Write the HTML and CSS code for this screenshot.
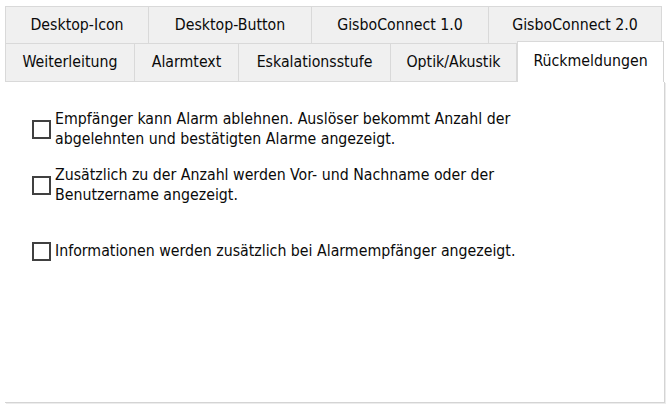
FILE: index.html
```html
<!DOCTYPE html>
<html lang="de">
<head>
<meta charset="utf-8">
<link rel="stylesheet" href="styles.css">
</head>
<body>
<div class="tabctl">
  <div class="row row1">
    <div class="tab w1">Desktop-Icon</div>
    <div class="tab w2">Desktop-Button</div>
    <div class="tab w3">GisboConnect 1.0</div>
    <div class="tab w4">GisboConnect 2.0</div>
  </div>
  <div class="row row2">
    <div class="tab w5">Weiterleitung</div>
    <div class="tab w6">Alarmtext</div>
    <div class="tab w7">Eskalationsstufe</div>
    <div class="tab w8">Optik/Akustik</div>
    <div class="tab sel">Rückmeldungen</div>
  </div>
  <div class="panel">
    <label class="opt opt1"><span class="box"></span><span class="txt">Empfänger kann Alarm ablehnen. Auslöser bekommt Anzahl der<br>abgelehnten und bestätigten Alarme angezeigt.</span></label>
    <label class="opt opt2"><span class="box"></span><span class="txt">Zusätzlich zu der Anzahl werden Vor- und Nachname oder der<br>Benutzername angezeigt.</span></label>
    <label class="opt opt3"><span class="box"></span><span class="txt">Informationen werden zusätzlich bei Alarmempfänger angezeigt.</span></label>
  </div>
</div>
</body>
</html>
```

FILE: styles.css
```css
* { box-sizing: border-box; }
html, body { margin: 0; padding: 0; background: #ffffff; }
body {
  width: 672px;
  height: 408px;
  overflow: hidden;
  font-family: "DejaVu Sans", sans-serif;
  font-stretch: condensed;
  font-size: 15.75px;
  color: #0a0a0a;
}
.tabctl {
  margin: 6px 0 0 5px;
  width: 660px;
}
.row { display: flex; align-items: flex-end; }
.tab {
  display: flex;
  align-items: center;
  justify-content: center;
  background: #f0f0f0;
  border-top: 1px solid #d9d9d9;
  border-right: 1px solid #d9d9d9;
  white-space: nowrap;
  padding-bottom: 2px;
}
.tab:first-child { border-left: 1px solid #d9d9d9; }
.row1 .tab { height: 37px; }
.row2 { margin-top: -2px; }
.row2 .tab { height: 39px; border-bottom: 1px solid #d9d9d9; }
.w1 { width: 144px; }
.w2 { width: 163px; }
.w3 { width: 177px; }
.w4 { width: 173px; }
.w5 { width: 130px; }
.w6 { width: 104px; }
.w7 { width: 152px; }
.w8 { width: 126px; }
.row2 .tab.sel {
  width: 147px;
  height: 41px;
  background: #ffffff;
  border-bottom: none;
  border-left: 1px solid #d9d9d9;
  border-right: 1px solid #d4d4d4;
  padding-bottom: 3px;
}
.panel {
  height: 321px;
  border-right: 1px solid #d4d4d4;
  border-bottom: 1px solid #d4d4d4;
  box-shadow: 1px 1px 0 #ececec;
  background: #ffffff;
  padding: 27px 0 0 27px;
  display: flex;
  flex-direction: column;
}
.opt {
  display: flex;
  align-items: center;
  gap: 4px;
  line-height: 20px;
}
.opt2 { margin-top: 16px; }
.opt3 { margin-top: 36px; }
.box {
  flex: none;
  width: 19px;
  height: 19px;
  border: 2px solid #404040;
  background: #ffffff;
}
.txt { display: block; }
```
